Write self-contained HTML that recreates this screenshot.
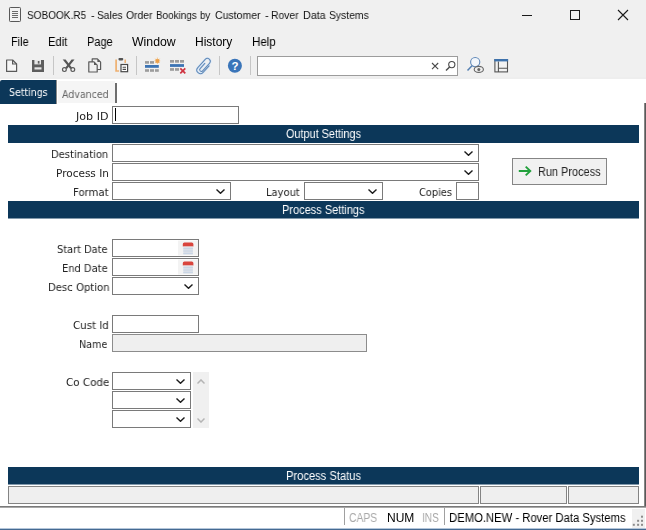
<!DOCTYPE html>
<html>
<head>
<meta charset="utf-8">
<title>SOBOOK.R5 - Sales Order Bookings by Customer - Rover Data Systems</title>
<style>
html,body{margin:0;padding:0;}
body{width:646px;height:530px;position:relative;overflow:hidden;background:#fff;font-family:"Liberation Sans",sans-serif;color:#000;}
.abs{position:absolute;}
.t{position:absolute;white-space:nowrap;transform-origin:0 0;display:block;will-change:transform;}
#chrome{left:0;top:0;width:646px;height:79px;background:#f0f0f0;border-bottom:0;box-shadow:inset 0 -2px 0 #eeeeee;}
.tsep{top:56px;width:1px;height:19px;background:#c6c6c6;}
#search{left:257px;top:56px;width:201px;height:20px;border:1px solid #9c9c9c;background:#fff;box-sizing:border-box;}
#tab1{left:0;top:80px;width:56px;height:24px;background:#0c3759;border-radius:2px 0 0 0;border-right:1px solid #8a8a8a;}
#tab2{left:58px;top:81px;width:57px;height:22px;background:#f5f5f5;}
#tab2b{left:115px;top:83px;width:2px;height:20px;background:#6e6e6e;}
.bar{left:8px;width:631px;height:18px;background:#0c3759;}
.inp{position:absolute;box-sizing:border-box;border:1px solid #7a7a7a;background:#fff;height:18px;}
.ro{background:#efefef;border-color:#8c8c8c;}
.chev{position:absolute;right:5px;top:6px;width:9px;height:5px;}
#re1{left:644px;top:103px;width:1px;height:404px;background:#868686;}
#re2{left:645px;top:103px;width:1px;height:405px;background:#5a5a5a;}
#sl1{left:0;top:506px;width:646px;height:1px;background:#7a7a7a;}
#sl2{left:0;top:507px;width:646px;height:1px;background:#a8a8a8;}
#grip{left:632px;top:509px;width:13px;height:19px;background:#f0f0f0;}
#bl1{left:0;top:528px;width:646px;height:1px;background:#b4c6da;}
#bl2{left:0;top:529px;width:646px;height:1px;background:#456a92;}
.ssep{top:508px;width:1px;height:17px;background:#a0a0a0;}
.pbox{position:absolute;top:486px;height:18px;box-sizing:border-box;border:1px solid #848484;background:#efefef;}
</style>
</head>
<body>
<div id="chrome" class="abs"></div>

<svg class="abs" style="left:0;top:0" width="646" height="30" viewBox="0 0 646 30">
<rect x="9.500" y="7.500" width="11" height="14" rx="0.800" fill="#f2f2f2" stroke="#585858" stroke-width="1"/>
<path d="M12 11.500h6M12 13.500h6M12 15.500h6M12 17.500h6" stroke="#6a6a6a" stroke-width="1"/>
<path d="M522 15.500h10" stroke="#1a1a1a" stroke-width="1"/>
<rect x="570.500" y="10.500" width="9" height="9" fill="none" stroke="#1a1a1a" stroke-width="1"/>
<path d="M618 10l10 10M628 10l-10 10" stroke="#1a1a1a" stroke-width="1.100"/>
</svg>

<!-- toolbar -->
<svg class="abs" style="left:0;top:52px" width="520" height="28" viewBox="0 52 520 28">
<!-- new -->
<path d="M6.600 60h6l4 4v7.400h-10z" fill="#f6f6f6" stroke="#5a5a5a" stroke-width="1.200" stroke-linejoin="round"/>
<path d="M12.600 60v4h4" fill="none" stroke="#5a5a5a" stroke-width="1.200"/>
<!-- save -->
<path d="M32 60h12v12h-12z" fill="#5e5e5e"/>
<rect x="34.400" y="60" width="6.600" height="4.400" fill="#e6e6e6"/>
<rect x="37.800" y="61" width="1.700" height="2.600" fill="#5e5e5e"/>
<rect x="34.500" y="67.300" width="7" height="2.200" fill="#e6e6e6"/>
<!-- scissors -->
<path d="M62.700 59.400l2.900 0l6.400 8.300l-1.700 1.300z" fill="#555"/>
<path d="M74.500 59.400l-2.900 0l-6.400 8.300l1.700 1.300z" fill="#555"/>
<circle cx="64.400" cy="69.600" r="1.900" fill="none" stroke="#5a5a5a" stroke-width="1.200"/>
<circle cx="72.800" cy="69.600" r="1.900" fill="none" stroke="#5a5a5a" stroke-width="1.200"/>
<!-- copy -->
<path d="M92.200 58.900h5.200l3.200 3.200v7.400h-8.400z" fill="#f0f0f0" stroke="#5a5a5a" stroke-width="1.200" stroke-linejoin="round"/>
<path d="M97.400 58.900v3.200h3.200z" fill="#5a5a5a"/>
<path d="M88.800 61.900h5.200l3.200 3.200v6.900h-8.400z" fill="#f0f0f0" stroke="#5a5a5a" stroke-width="1.200" stroke-linejoin="round"/>
<path d="M94 61.900v3.200h3.200z" fill="#5a5a5a"/>
<!-- paste -->
<path d="M116.100 59.400v11.600h3" fill="none" stroke="#eeb070" stroke-width="1.700"/>
<path d="M125.200 59.400v3.700" fill="none" stroke="#eeb070" stroke-width="1.500"/>
<rect x="118.500" y="58" width="4.700" height="2.400" rx="0.800" fill="#555"/>
<rect x="121" y="64.500" width="6.600" height="7.200" fill="#fff" stroke="#484848" stroke-width="1.200"/>
<path d="M122.600 67.300h3.400M122.600 69.400h3.400" stroke="#484848" stroke-width="1.100"/>
<!-- grid add -->
<rect x="145" y="61.100" width="4" height="2.600" fill="#9c9c9c"/><rect x="150" y="61.100" width="4" height="2.600" fill="#9c9c9c"/><path d="M157.400 57.600v6.400M154.600 60.800h5.600M155.300 58.700l4.200 4.200M159.500 58.700l-4.200 4.200" stroke="#f3c48a" stroke-width="1"/><rect x="155.600" y="59.200" width="3.600" height="3.600" fill="#eca04a"/>
<rect x="145" y="65" width="13.800" height="2.800" fill="#3c74b4"/>
<rect x="145" y="69.200" width="4" height="2.600" fill="#9c9c9c"/><rect x="150" y="69.200" width="4" height="2.600" fill="#9c9c9c"/><rect x="155" y="69.200" width="3.800" height="2.600" fill="#9c9c9c"/>
<!-- grid delete -->
<rect x="170" y="60" width="4" height="2.700" fill="#9c9c9c"/><rect x="175" y="60" width="4" height="2.700" fill="#9c9c9c"/><rect x="180" y="60" width="4" height="2.700" fill="#9c9c9c"/>
<rect x="170" y="64.100" width="14" height="2.800" fill="#3c74b4"/>
<rect x="170" y="68.100" width="4" height="2.700" fill="#9c9c9c"/><rect x="175" y="68.100" width="4" height="2.700" fill="#9c9c9c"/>
<path d="M180.300 68.400l5 5M185.300 68.400l-5 5" stroke="#cf3340" stroke-width="1.700"/>
<!-- paperclip -->
<g transform="translate(204.100 66) rotate(42.300)" fill="none" stroke-linecap="round">
<path d="M3.600 -3.500V5.400a3.600 3.600 0 0 1 -7.200 0V-5.600a2.900 2.900 0 0 1 5.800 0V4.600a1.700 1.700 0 0 1 -3.400 0V-2.400" stroke="#dbe8f6" stroke-width="2.400"/>
<path d="M3.600 -3.500V5.400a3.600 3.600 0 0 1 -7.200 0V-5.600a2.900 2.900 0 0 1 5.800 0V4.600a1.700 1.700 0 0 1 -3.400 0V-2.400" stroke="#6088b6" stroke-width="1"/>
</g>
<!-- help -->
<circle cx="234.900" cy="65.800" r="7" fill="#3a75b9"/>
<text x="234.900" y="69.900" font-family="Liberation Sans, sans-serif" font-weight="bold" font-size="11.500" fill="#fff" text-anchor="middle">?</text>
</svg>
<div class="abs tsep" style="left:53px"></div>
<div class="abs tsep" style="left:136px"></div>
<div class="abs tsep" style="left:219px"></div>
<div class="abs tsep" style="left:250px"></div>
<div id="search" class="abs"></div>
<svg class="abs" style="left:425px;top:52px" width="95" height="28" viewBox="425 52 95 28">
<path d="M432 63l6.200 6.200M438.200 63l-6.200 6.200" stroke="#4a4a4a" stroke-width="1.100"/>
<circle cx="451.800" cy="64.600" r="3.100" fill="none" stroke="#4a4a4a" stroke-width="1.100"/>
<path d="M449.600 67l-3.600 3.600" stroke="#4a4a4a" stroke-width="1.400"/>
<!-- find/eye -->
<circle cx="475.200" cy="62.100" r="4.600" fill="#f2f6fb" stroke="#6088b8" stroke-width="1.100"/>
<path d="M472 65.800l-4.500 4.700" stroke="#5580b2" stroke-width="1.500"/>
<ellipse cx="478.800" cy="69.400" rx="4.600" ry="3" fill="#f0f0f0" stroke="#666" stroke-width="1.100"/>
<circle cx="478.800" cy="69.400" r="1.500" fill="#666"/>
<!-- layout -->
<rect x="494.900" y="59.600" width="12.600" height="12.300" fill="#f2f2f2" stroke="#555" stroke-width="1.100"/>
<path d="M498.400 61.500v10.400M498.400 68.300h9" stroke="#555" stroke-width="1.100" fill="none"/>
<rect x="494.300" y="59" width="13.800" height="2.400" fill="#3e72ac"/>
</svg>

<!-- tabs -->
<div id="tab1" class="abs"></div>
<div id="tab2" class="abs"></div>
<div id="tab2b" class="abs"></div>

<div id="re1" class="abs"></div>
<div id="re2" class="abs"></div>

<!-- Job ID -->
<div class="inp" style="left:112px;top:106px;width:127px;"></div>
<div class="abs" style="left:115px;top:108px;width:1px;height:13px;background:#000"></div>

<div class="abs bar" style="top:125px"></div>

<div class="inp" style="left:112px;top:144px;width:367px;"><svg class="chev" viewBox="0 0 9 5"><path d="M0.500 0.500l4 3.800l4-3.800" fill="none" stroke="#1c1c1c" stroke-width="1.400"/></svg></div>
<div class="inp" style="left:112px;top:163px;width:367px;"><svg class="chev" viewBox="0 0 9 5"><path d="M0.500 0.500l4 3.800l4-3.800" fill="none" stroke="#1c1c1c" stroke-width="1.400"/></svg></div>
<div class="inp" style="left:112px;top:182px;width:119px;"><svg class="chev" viewBox="0 0 9 5"><path d="M0.500 0.500l4 3.800l4-3.800" fill="none" stroke="#1c1c1c" stroke-width="1.400"/></svg></div>
<div class="inp" style="left:304px;top:182px;width:79px;"><svg class="chev" viewBox="0 0 9 5"><path d="M0.500 0.500l4 3.800l4-3.800" fill="none" stroke="#1c1c1c" stroke-width="1.400"/></svg></div>
<div class="inp" style="left:456px;top:182px;width:23px;"></div>

<!-- Run Process button -->
<div class="abs" style="left:512px;top:158px;width:95px;height:27px;box-sizing:border-box;border:1px solid #858585;background:#f1f1f1;"></div>
<svg class="abs" style="left:517px;top:164px" width="16" height="14" viewBox="517 164 16 14"><path d="M518.800 171h10.800M525.700 166.600l4.600 4.400l-4.600 4.400" fill="none" stroke="#22a03c" stroke-width="1.900"/></svg>

<div class="abs bar" style="top:201px;height:17px;border-bottom:1px solid #8299ab"></div>

<div class="inp" style="left:112px;top:239px;width:87px;"></div>
<div class="inp" style="left:112px;top:258px;width:87px;"></div>
<svg class="abs" style="left:177px;top:240px" width="22" height="36" viewBox="177 240 22 36">
<g id="cal">
<rect x="178" y="240.500" width="20" height="15" fill="#f3f3f3"/>
<path d="M182.800 246.600v-2.600a1.600 1.600 0 0 1 1.600 -1.600h7.400a1.600 1.600 0 0 1 1.600 1.600v2.600z" fill="#d9453d"/>
<rect x="183.300" y="246.600" width="9.600" height="8" fill="#dde1e8"/>
<path d="M183.300 248.600h9.600M183.300 251h9.600M183.300 253.400h9.600" stroke="#c4d2e4" stroke-width="0.900"/>
</g>
<use href="#cal" y="19"/>
</svg>
<div class="inp" style="left:112px;top:277px;width:87px;"><svg class="chev" viewBox="0 0 9 5"><path d="M0.500 0.500l4 3.800l4-3.800" fill="none" stroke="#1c1c1c" stroke-width="1.400"/></svg></div>

<div class="inp" style="left:112px;top:315px;width:87px;"></div>
<div class="inp ro" style="left:112px;top:334px;width:255px;"></div>

<div class="inp" style="left:112px;top:372px;width:79px;"><svg class="chev" viewBox="0 0 9 5"><path d="M0.500 0.500l4 3.800l4-3.800" fill="none" stroke="#1c1c1c" stroke-width="1.400"/></svg></div>
<div class="inp" style="left:112px;top:391px;width:79px;"><svg class="chev" viewBox="0 0 9 5"><path d="M0.500 0.500l4 3.800l4-3.800" fill="none" stroke="#1c1c1c" stroke-width="1.400"/></svg></div>
<div class="inp" style="left:112px;top:410px;width:79px;"><svg class="chev" viewBox="0 0 9 5"><path d="M0.500 0.500l4 3.800l4-3.800" fill="none" stroke="#1c1c1c" stroke-width="1.400"/></svg></div>
<div class="abs" style="left:193px;top:372px;width:16px;height:56px;background:#f0f0f0;">
<svg class="abs" style="left:4px;top:7px" width="8" height="5" viewBox="0 0 8 5"><path d="M0.500 4.500l3.500-3.600l3.500 3.600" fill="none" stroke="#b4b4b4" stroke-width="1.400"/></svg>
<svg class="abs" style="left:4px;top:46px" width="8" height="5" viewBox="0 0 8 5"><path d="M0.500 0.500l3.500 3.600l3.500-3.600" fill="none" stroke="#b4b4b4" stroke-width="1.400"/></svg>
</div>

<div class="abs bar" style="top:467px;height:17px;border-bottom:1px solid #8299ab"></div>
<div class="pbox" style="left:8px;width:471px"></div>
<div class="pbox" style="left:480px;width:87px"></div>
<div class="pbox" style="left:568px;width:71px"></div>

<div id="sl1" class="abs"></div>
<div id="sl2" class="abs"></div>
<div id="grip" class="abs"></div>
<div id="bl1" class="abs"></div>
<div id="bl2" class="abs"></div>
<div class="abs ssep" style="left:344px"></div>
<div class="abs ssep" style="left:444px"></div>
<svg class="abs" style="left:632px;top:514px" width="13" height="13" viewBox="632 514 13 13">
<g fill="#8c8c8c"><rect x="641" y="515.700" width="2" height="2"/><rect x="641" y="519.800" width="2" height="2"/><rect x="641" y="523.800" width="2" height="2"/><rect x="637.100" y="519.800" width="2" height="2"/><rect x="637.100" y="523.800" width="2" height="2"/><rect x="632.800" y="523.800" width="2" height="2"/></g>
</svg>

<span class="t" style="left:27.3px;top:10.0px;font-size:11px;line-height:11px;color:#111;transform:scaleX(0.9121);">SOBOOK.R5</span>
<span class="t" style="left:90.5px;top:10.0px;font-size:11px;line-height:11px;color:#111;transform:scaleX(1.0077);">-</span>
<span class="t" style="left:97.0px;top:10.0px;font-size:11px;line-height:11px;color:#111;transform:scaleX(0.9299);">Sales</span>
<span class="t" style="left:126.2px;top:10.0px;font-size:11px;line-height:11px;color:#111;transform:scaleX(0.9422);">Order</span>
<span class="t" style="left:156.0px;top:10.0px;font-size:11px;line-height:11px;color:#111;transform:scaleX(0.8991);">Bookings</span>
<span class="t" style="left:200.4px;top:10.0px;font-size:11px;line-height:11px;color:#111;transform:scaleX(0.8860);">by</span>
<span class="t" style="left:214.5px;top:10.0px;font-size:11px;line-height:11px;color:#111;transform:scaleX(0.9562);">Customer</span>
<span class="t" style="left:264.5px;top:10.0px;font-size:11px;line-height:11px;color:#111;transform:scaleX(1.0349);">-</span>
<span class="t" style="left:271.3px;top:10.0px;font-size:11px;line-height:11px;color:#111;transform:scaleX(0.9406);">Rover</span>
<span class="t" style="left:302.7px;top:10.0px;font-size:11px;line-height:11px;color:#111;transform:scaleX(0.9763);">Data</span>
<span class="t" style="left:329.2px;top:10.0px;font-size:11px;line-height:11px;color:#111;transform:scaleX(0.9410);">Systems</span>
<span class="t" style="left:10.9px;top:35.8px;font-size:12px;line-height:12px;color:#000;transform:scaleX(0.9099);">File</span>
<span class="t" style="left:47.8px;top:35.8px;font-size:12px;line-height:12px;color:#000;transform:scaleX(0.9329);">Edit</span>
<span class="t" style="left:86.9px;top:35.8px;font-size:12px;line-height:12px;color:#000;transform:scaleX(0.9168);">Page</span>
<span class="t" style="left:131.5px;top:35.8px;font-size:12px;line-height:12px;color:#000;transform:scaleX(1.0237);">Window</span>
<span class="t" style="left:195.3px;top:35.8px;font-size:12px;line-height:12px;color:#000;transform:scaleX(0.9908);">History</span>
<span class="t" style="left:252.4px;top:35.8px;font-size:12px;line-height:12px;color:#000;transform:scaleX(0.9600);">Help</span>
<span class="t" style="left:8.8px;top:86.8px;font-size:10.5px;line-height:10px;font-family:&quot;DejaVu Sans&quot;,sans-serif;color:#fff;transform:scaleX(0.8960);">Settings</span>
<span class="t" style="left:62.1px;top:88.8px;font-size:10.5px;line-height:10px;font-family:&quot;DejaVu Sans&quot;,sans-serif;color:#666;transform:scaleX(0.8983);">Advanced</span>
<span class="t" style="left:285.7px;top:128.1px;font-size:12px;line-height:12px;color:#fff;transform:scaleX(0.9067);">Output Settings</span>
<span class="t" style="left:282.0px;top:204.1px;font-size:12px;line-height:12px;color:#fff;transform:scaleX(0.9162);">Process Settings</span>
<span class="t" style="left:286.0px;top:470.1px;font-size:12px;line-height:12px;color:#fff;transform:scaleX(0.9293);">Process Status</span>
<span class="t" style="left:538.1px;top:165.6px;font-size:12px;line-height:12px;color:#222;transform:scaleX(0.9112);">Run Process</span>
<span class="t" style="left:76.0px;top:110.6px;font-size:10.5px;line-height:10px;font-family:&quot;DejaVu Sans&quot;,sans-serif;color:#222;transform:scaleX(1.0580);">Job ID</span>
<span class="t" style="left:51.2px;top:148.7px;font-size:10.5px;line-height:10px;font-family:&quot;DejaVu Sans&quot;,sans-serif;color:#222;transform:scaleX(0.9508);">Destination</span>
<span class="t" style="left:56.0px;top:167.7px;font-size:10.5px;line-height:10px;font-family:&quot;DejaVu Sans&quot;,sans-serif;color:#222;transform:scaleX(0.9920);">Process In</span>
<span class="t" style="left:73.0px;top:186.7px;font-size:10.5px;line-height:10px;font-family:&quot;DejaVu Sans&quot;,sans-serif;color:#222;transform:scaleX(0.9591);">Format</span>
<span class="t" style="left:266.4px;top:186.7px;font-size:10.5px;line-height:10px;font-family:&quot;DejaVu Sans&quot;,sans-serif;color:#222;transform:scaleX(0.9467);">Layout</span>
<span class="t" style="left:419.0px;top:186.7px;font-size:10.5px;line-height:10px;font-family:&quot;DejaVu Sans&quot;,sans-serif;color:#222;transform:scaleX(0.9353);">Copies</span>
<span class="t" style="left:57.3px;top:243.6px;font-size:10.5px;line-height:10px;font-family:&quot;DejaVu Sans&quot;,sans-serif;color:#222;transform:scaleX(0.9354);">Start Date</span>
<span class="t" style="left:62.3px;top:262.6px;font-size:10.5px;line-height:10px;font-family:&quot;DejaVu Sans&quot;,sans-serif;color:#222;transform:scaleX(0.9423);">End Date</span>
<span class="t" style="left:47.7px;top:281.6px;font-size:10.5px;line-height:10px;font-family:&quot;DejaVu Sans&quot;,sans-serif;color:#222;transform:scaleX(0.9599);">Desc Option</span>
<span class="t" style="left:72.6px;top:319.6px;font-size:10.5px;line-height:10px;font-family:&quot;DejaVu Sans&quot;,sans-serif;color:#222;transform:scaleX(0.9758);">Cust Id</span>
<span class="t" style="left:79.4px;top:338.6px;font-size:10.5px;line-height:10px;font-family:&quot;DejaVu Sans&quot;,sans-serif;color:#222;transform:scaleX(0.9166);">Name</span>
<span class="t" style="left:65.5px;top:376.6px;font-size:10.5px;line-height:10px;font-family:&quot;DejaVu Sans&quot;,sans-serif;color:#222;transform:scaleX(0.9867);">Co Code</span>
<span class="t" style="left:349.1px;top:511.5px;font-size:12px;line-height:12px;color:#a8a8a8;transform:scaleX(0.8566);">CAPS</span>
<span class="t" style="left:387.0px;top:511.5px;font-size:12px;line-height:12px;color:#000;transform:scaleX(0.9953);">NUM</span>
<span class="t" style="left:422.1px;top:511.5px;font-size:12px;line-height:12px;color:#a8a8a8;transform:scaleX(0.8443);">INS</span>
<span class="t" style="left:448.9px;top:511.5px;font-size:12px;line-height:12px;color:#000;transform:scaleX(0.9392);">DEMO.NEW - Rover Data Systems</span>
</body>
</html>
